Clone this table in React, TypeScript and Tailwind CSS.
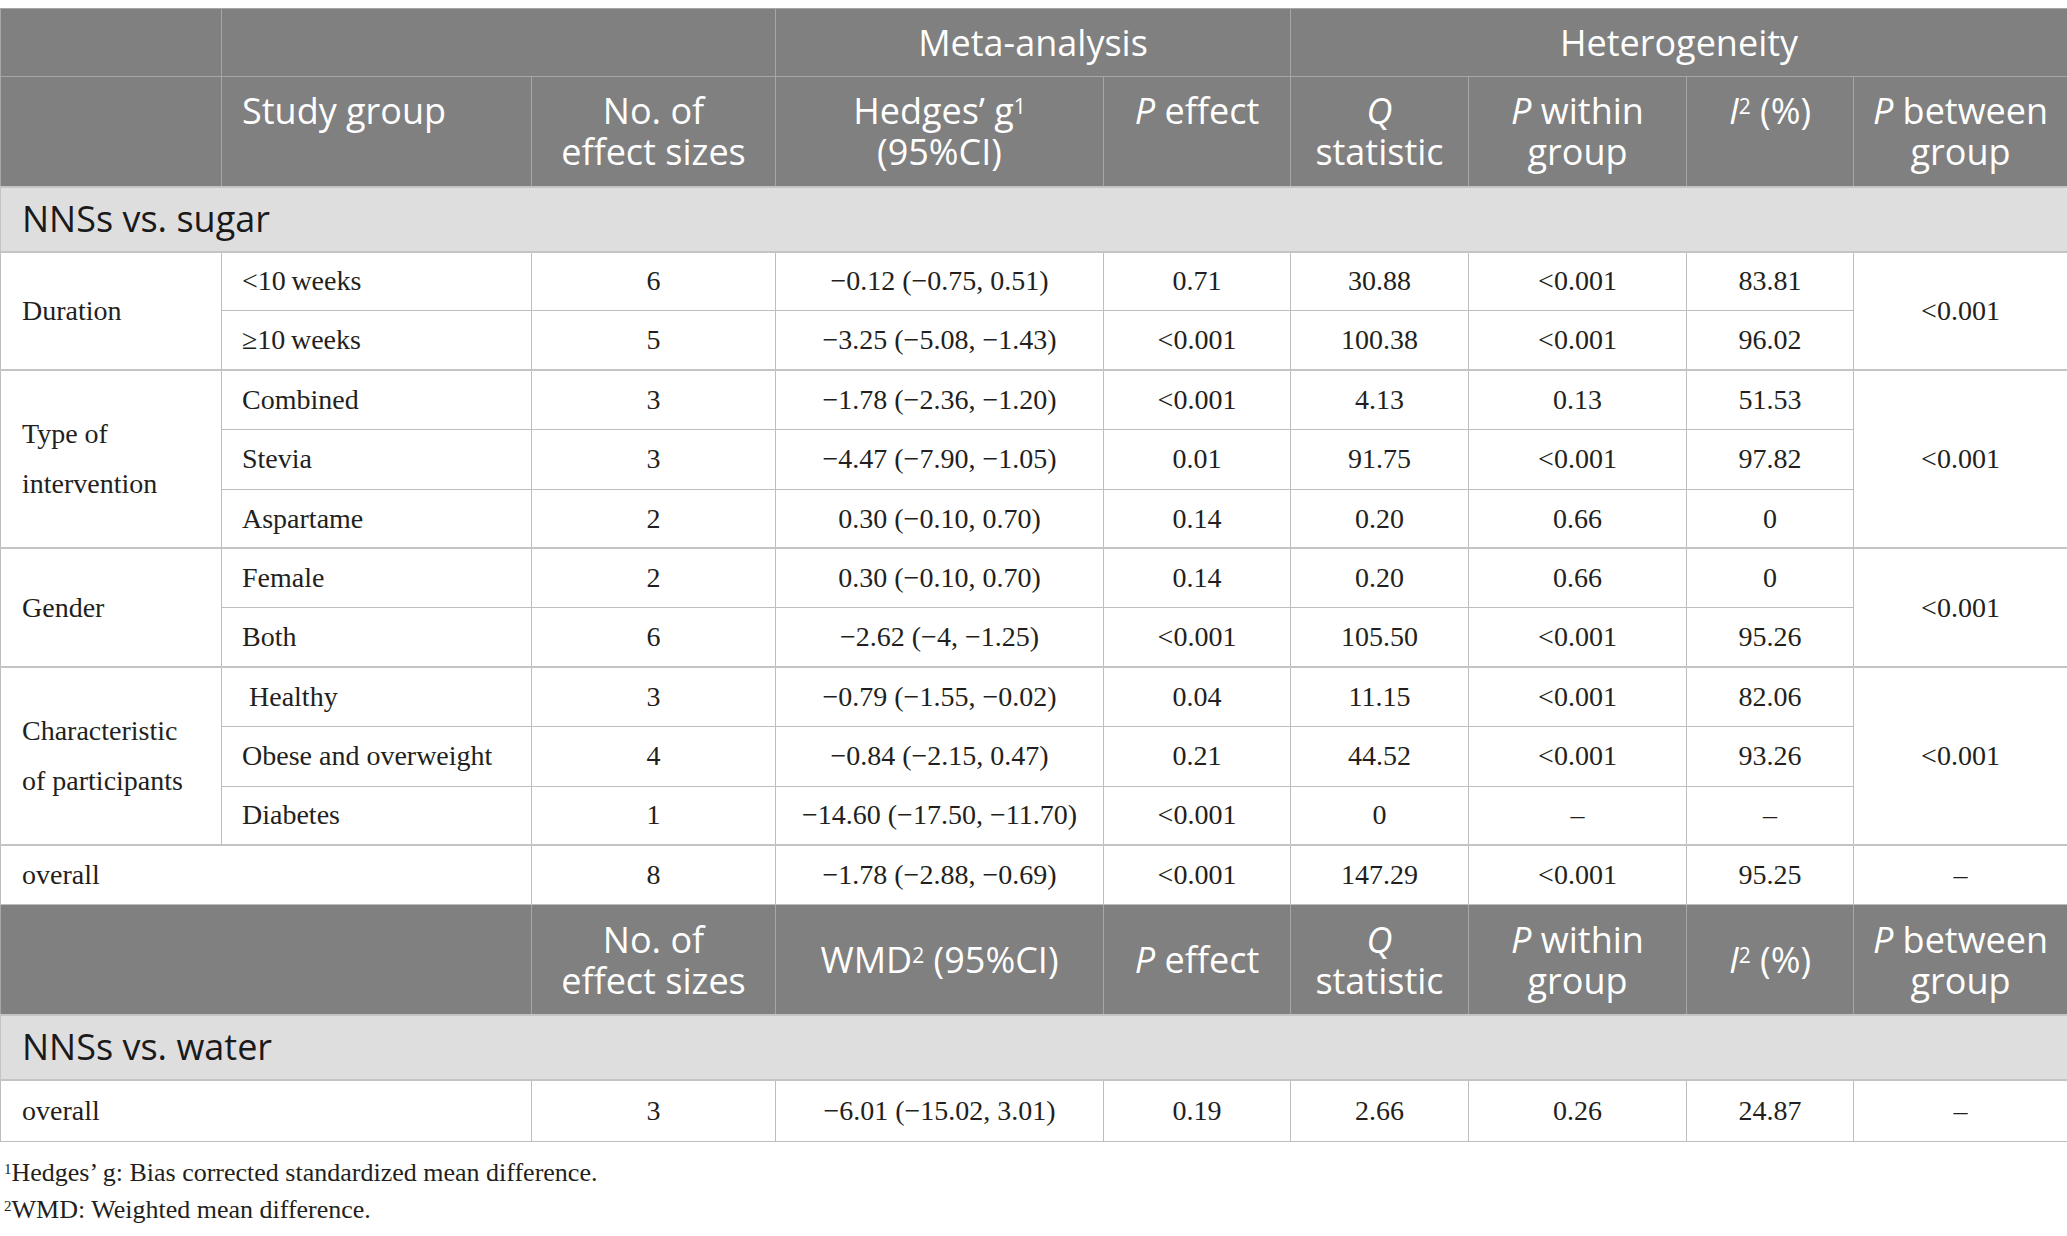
const hd =
  "bg-[#808080] border border-[#a6a6a6] text-white font-['Open_Sans',sans-serif] text-[36px] leading-[41px] font-normal";
const bd =
  "border border-[#bdbdbd] font-['Liberation_Serif',serif] text-[28px] leading-[50px] text-[#231f20] py-0";
const grp = "border-t-2 border-t-[#c4c4c4]";

type Group = {
  name: string[];
  between: string;
  rows: string[][];
};

const groups: Group[] = [
  {
    name: ["Duration"],
    between: "<0.001",
    rows: [
      ["<10\u2009weeks", "6", "\u22120.12 (\u22120.75, 0.51)", "0.71", "30.88", "<0.001", "83.81"],
      ["\u226510\u2009weeks", "5", "\u22123.25 (\u22125.08, \u22121.43)", "<0.001", "100.38", "<0.001", "96.02"],
    ],
  },
  {
    name: ["Type of", "intervention"],
    between: "<0.001",
    rows: [
      ["Combined", "3", "\u22121.78 (\u22122.36, \u22121.20)", "<0.001", "4.13", "0.13", "51.53"],
      ["Stevia", "3", "\u22124.47 (\u22127.90, \u22121.05)", "0.01", "91.75", "<0.001", "97.82"],
      ["Aspartame", "2", "0.30 (\u22120.10, 0.70)", "0.14", "0.20", "0.66", "0"],
    ],
  },
  {
    name: ["Gender"],
    between: "<0.001",
    rows: [
      ["Female", "2", "0.30 (\u22120.10, 0.70)", "0.14", "0.20", "0.66", "0"],
      ["Both", "6", "\u22122.62 (\u22124, \u22121.25)", "<0.001", "105.50", "<0.001", "95.26"],
    ],
  },
  {
    name: ["Characteristic", "of participants"],
    between: "<0.001",
    rows: [
      ["\u00a0Healthy", "3", "\u22120.79 (\u22121.55, \u22120.02)", "0.04", "11.15", "<0.001", "82.06"],
      ["Obese and overweight", "4", "\u22120.84 (\u22122.15, 0.47)", "0.21", "44.52", "<0.001", "93.26"],
      ["Diabetes", "1", "\u221214.60 (\u221217.50, \u221211.70)", "<0.001", "0", "\u2013", "\u2013"],
    ],
  },
];

const HeadCells = ({ middle, effect }: { middle: boolean; effect: React.ReactNode }) => {
  const v = middle ? "align-middle" : "align-top pt-[13px]";
  return (
    <>
      <th className={`${hd} ${v} text-center`}>
        No. of
        <br />
        effect sizes
      </th>
      <th className={`${hd} ${v} text-center`}>{effect}</th>
      <th className={`${hd} ${v} text-center`}>
        <i>P</i> effect
      </th>
      <th className={`${hd} ${v} text-center`}>
        <i>Q</i>
        <br />
        statistic
      </th>
      <th className={`${hd} ${v} text-center`}>
        <i>P</i> within
        <br />
        group
      </th>
      <th className={`${hd} ${v} text-center`}>
        <i>I</i>
        <sup className="text-[21px]">2</sup> (%)
      </th>
      <th className={`${hd} ${v} text-center`}>
        <i>P</i> between
        <br />
        group
      </th>
    </>
  );
};

const Section = ({ label }: { label: string }) => (
  <tr className="h-[65px]">
    <td
      colSpan={9}
      className="bg-[#dfdedf] border border-[#c4c4c4] border-t-2 px-[21px] font-['Open_Sans',sans-serif] text-[36px] text-[#1a1a1a] align-middle"
    >
      {label}
    </td>
  </tr>
);

export default function App() {
  return (
    <div className="w-[2067px] bg-white pt-[8px]">
      <table className="w-[2067px] table-fixed border-collapse border border-[#c4c4c4]">
        <colgroup>
          <col className="w-[221px]" />
          <col className="w-[310px]" />
          <col className="w-[244px]" />
          <col className="w-[328px]" />
          <col className="w-[187px]" />
          <col className="w-[178px]" />
          <col className="w-[218px]" />
          <col className="w-[167px]" />
          <col className="w-[214px]" />
        </colgroup>
        <thead>
          <tr className="h-[68px]">
            <th className={hd}></th>
            <th className={hd} colSpan={2}></th>
            <th className={`${hd} text-center align-middle`} colSpan={2}>
              Meta-analysis
            </th>
            <th className={`${hd} text-center align-middle`} colSpan={4}>
              Heterogeneity
            </th>
          </tr>
          <tr className="h-[110px]">
            <th className={hd}></th>
            <th className={`${hd} align-top pt-[13px] text-left px-[20px]`}>Study group</th>
            <HeadCells
              middle={false}
              effect={
                <>
                  Hedges’ g<sup className="text-[21px]">1</sup>
                  <br />
                  (95%CI)
                </>
              }
            />
          </tr>
        </thead>
        <tbody>
          <Section label="NNSs vs. sugar" />
          {groups.map((g) =>
            g.rows.map((r, i) => (
              <tr key={g.name[0] + i} className="h-[59.4px]">
                {i === 0 && (
                  <td rowSpan={g.rows.length} className={`${bd} ${grp} px-[21px] text-left align-middle`}>
                    {g.name.map((n) => (
                      <div key={n}>{n}</div>
                    ))}
                  </td>
                )}
                <td className={`${bd} ${i === 0 ? grp : ""} px-[20px] text-left whitespace-nowrap`}>{r[0]}</td>
                {r.slice(1).map((c, j) => (
                  <td key={j} className={`${bd} ${i === 0 ? grp : ""} text-center whitespace-nowrap`}>
                    {c}
                  </td>
                ))}
                {i === 0 && (
                  <td rowSpan={g.rows.length} className={`${bd} ${grp} text-center align-middle`}>
                    {g.between}
                  </td>
                )}
              </tr>
            ))
          )}
          <tr className="h-[59.4px]">
            <td colSpan={2} className={`${bd} ${grp} px-[21px] text-left`}>
              overall
            </td>
            {["8", "\u22121.78 (\u22122.88, \u22120.69)", "<0.001", "147.29", "<0.001", "95.25", "\u2013"].map((c, j) => (
              <td key={j} className={`${bd} ${grp} text-center`}>
                {c}
              </td>
            ))}
          </tr>
          <tr className="h-[110px]">
            <th className={hd} colSpan={2}></th>
            <HeadCells
              middle
              effect={
                <>
                  WMD<sup className="text-[21px]">2</sup> (95%CI)
                </>
              }
            />
          </tr>
          <Section label="NNSs vs. water" />
          <tr className="h-[62px]">
            <td colSpan={2} className={`${bd} ${grp} px-[21px] text-left`}>
              overall
            </td>
            {["3", "\u22126.01 (\u221215.02, 3.01)", "0.19", "2.66", "0.26", "24.87", "\u2013"].map((c, j) => (
              <td key={j} className={`${bd} ${grp} text-center`}>
                {c}
              </td>
            ))}
          </tr>
        </tbody>
      </table>
      <div className="pt-[12px] pl-[4px] font-['Liberation_Serif',serif] text-[26px] leading-[37px] text-[#231f20]">
        <p>
          <sup className="text-[15px]">1</sup>Hedges’ g: Bias corrected standardized mean difference.
        </p>
        <p>
          <sup className="text-[15px]">2</sup>WMD: Weighted mean difference.
        </p>
      </div>
    </div>
  );
}
